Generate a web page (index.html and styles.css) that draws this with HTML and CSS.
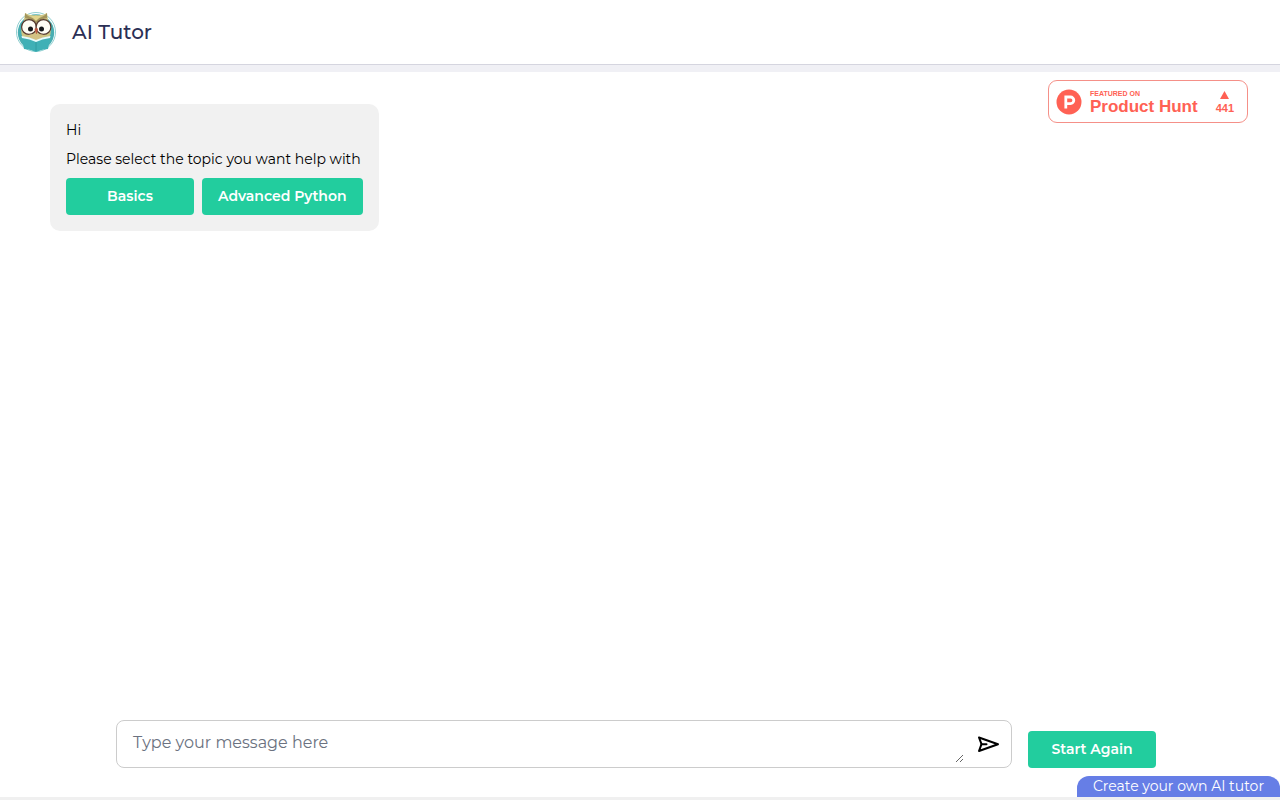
FILE: index.html
```html
<!DOCTYPE html>
<html lang="en">
<head>
    <meta charset="UTF-8">
    <meta name="viewport" content="width=device-width, initial-scale=1.0">
    <title>AI Tutor</title>
    <link rel="stylesheet" href="styles.css">
</head>
<body>
    <header class="header">
        <svg class="logo" viewBox="0 0 40 40" aria-hidden="true">
            <circle cx="20" cy="20" r="19.5" fill="#fff" stroke="#8fcfd0" stroke-width="1"/>
            <circle cx="20" cy="20.5" r="18.2" fill="#48aeb2"/>
            <path d="M9 1 Q14 4 20 3 Q26 4 31 1 L32 8 Q37 18 33 27 L7 27 Q3 18 8 8Z" fill="#cdc584"/>
            <path d="M9 1 Q12 5 20 7 Q28 5 31 1 L31 6 Q25 7 20 12 Q15 7 9 6Z" fill="#a3945c"/>
            <path d="M15 4 L20 9 L25 4Z" fill="#e2d58d"/>
            <circle cx="13" cy="15" r="7.4" fill="#fffdf4" stroke="#55392f" stroke-width="1.2"/>
            <circle cx="27.500" cy="15" r="7.4" fill="#fffdf4" stroke="#55392f" stroke-width="1.2"/>
            <circle cx="14.500" cy="17" r="2.500" fill="#17191b"/>
            <circle cx="25.500" cy="17" r="2.500" fill="#17191b"/>
            <path d="M18.500 17 Q20.500 15 22 17 L20.500 23Z" fill="#bd5a43"/>
            <path d="M12 23 Q20 21 28 23 L27 28 H13Z" fill="#d3c284"/>
            <path d="M6 25 Q14 25 20 29 Q26 25 34 25 L32 37 Q26 37 20 40 Q14 37 8 37Z" fill="#3fb0b6"/>
            <path d="M5.500 24 Q14 25 20 28 Q26 25 34.500 24 L34 26 Q26 27 20 30 Q14 27 6 26Z" fill="#e9fafa"/>
            <path d="M20 30 V39" stroke="#2f979d" stroke-width=".8"/>
        </svg>
        <h1>AI Tutor</h1>
    </header>

    <main class="chat">
        <a class="ph-badge" href="#">
            <svg class="ph-logo" viewBox="0 0 26 26" aria-hidden="true">
                <circle cx="13" cy="13" r="12.500" fill="#ff6154"/>
                <path d="M9.800 19.500 V8 H14.500 A3.300 3.300 0 0 1 14.500 14.600 H9.800" fill="none" stroke="#fff" stroke-width="2.800"/>
            </svg>
            <span class="ph-text">
                <span class="ph-featured">FEATURED ON</span>
                <span class="ph-name">Product Hunt</span>
            </span>
            <span class="ph-votes">
                <svg viewBox="0 0 9 8" aria-hidden="true"><path d="M4.500 0 L9 8 H0Z" fill="#ff6154"/></svg>
                <span>441</span>
            </span>
        </a>

        <div class="messages">
            <div class="message">
                <p>Hi</p>
                <p>Please select the topic you want help with</p>
                <div class="options">
                    <button type="button" class="btn">Basics</button>
                    <button type="button" class="btn">Advanced Python</button>
                </div>
            </div>
        </div>

        <div class="chat-bar">
            <form class="chat-form">
                <div class="input-box">
                    <textarea rows="1" placeholder="Type your message here" aria-label="Message"></textarea>
                    <button type="submit" class="send" aria-label="Send">
                        <svg viewBox="0 0 24 24" fill="none" stroke="#000" stroke-width="2" stroke-linejoin="round" stroke-linecap="round" aria-hidden="true">
                            <path d="M3 5.500 L22 12.200 L3 19 L5.500 12.200Z"/>
                            <path d="M5.500 12.200 H10.500"/>
                        </svg>
                    </button>
                </div>
                <button type="button" class="btn">Start Again</button>
            </form>
        </div>

        <a class="create-link" href="#">Create your own AI tutor</a>
    </main>
</body>
</html>
```
FILE: styles.css
```css
:root {
    --accent-color: #22cd9e;
    --ph-color: #ff6154;
    --band-color: #f0f0f5;
}

* {
    box-sizing: border-box;
    margin: 0;
    padding: 0;
}

body {
    font-family: Montserrat, Inter, sans-serif;
    font-size: 14px;
    line-height: 21px;
    color: #000;
    background: #fff;
    min-height: 100vh;
    display: flex;
    flex-direction: column;
    border-bottom: 3px solid #f0f0f0;
}

button,
textarea {
    font-family: inherit;
}

.header {
    display: flex;
    align-items: center;
    gap: 16px;
    padding: 12px 16px;
    border-bottom: 1px solid #d5d5df;
}

.logo {
    width: 40px;
    height: 40px;
}

.header h1 {
    font-size: 20px;
    font-weight: 500;
    line-height: 28px;
    color: #2b2f55;
}

.chat {
    position: relative;
    flex: 1;
    display: flex;
    flex-direction: column;
    border-top: 7px solid var(--band-color);
}

/* Product Hunt badge floats over the conversation */
.ph-badge {
    position: absolute;
    top: 8px;
    right: 32px;
    display: flex;
    align-items: center;
    width: 200px;
    height: 43px;
    padding: 0 13px 0 7px;
    border: 1px solid #f59088;
    border-radius: 9px;
    background: #fff;
    color: var(--ph-color);
    font-family: "Liberation Sans", Arial, sans-serif;
    font-weight: 700;
    text-decoration: none;
}

.ph-logo {
    width: 26px;
    height: 26px;
    margin-right: 8px;
}

.ph-text {
    display: flex;
    flex-direction: column;
    padding-top: 2px;
}

.ph-featured {
    font-size: 7px;
    line-height: 8px;
}

.ph-name {
    font-size: 17px;
    line-height: 18px;
}

.ph-votes {
    display: flex;
    flex-direction: column;
    align-items: center;
    gap: 3px;
    margin-left: auto;
    padding-top: 2px;
    font-size: 11px;
    line-height: 13px;
}

.ph-votes svg {
    width: 9px;
    height: 8px;
}

.messages {
    flex: 1;
    padding: 32px 50px;
}

.message {
    width: fit-content;
    padding: 16px;
    border-radius: 10px;
    background: #f1f1f1;
}

.message p {
    margin-bottom: 8px;
}

.options {
    display: flex;
    gap: 8px;
}

.btn {
    min-width: 128px;
    padding: 8px 16px;
    border: none;
    border-radius: 4px;
    background: var(--accent-color);
    color: #fff;
    font-size: 14px;
    font-weight: 600;
    line-height: 21px;
    cursor: pointer;
}

.chat-bar {
    padding: 0 8px 8px 0;
}

.chat-form {
    display: flex;
    align-items: flex-end;
    gap: 16px;
    max-width: 1040px;
    margin: 0 auto;
}

.input-box {
    flex: 1;
    display: flex;
    align-items: center;
    height: 48px;
    padding-right: 11px;
    border: 1px solid #ccc;
    border-radius: 8px;
}

.input-box textarea {
    flex: 1;
    min-width: 0;
    height: 42px;
    margin-bottom: 4px;
    padding: 10px 16px 8px;
    border: none;
    outline: none;
    background: transparent;
    font-size: 16px;
    line-height: 24px;
    resize: vertical;
}

.input-box textarea::placeholder {
    color: #6b7280;
}

.send {
    display: flex;
    margin-left: 12px;
    border: none;
    background: none;
    cursor: pointer;
}

.send svg {
    width: 24px;
    height: 24px;
}

.create-link {
    align-self: flex-end;
    padding: 0 16px;
    border-radius: 12px 12px 0 0;
    background: #667ee6;
    color: #fff;
    text-decoration: none;
}

@media (max-width: 600px) {
    .chat-bar {
        padding: 0 8px 8px;
    }

    .messages {
        padding: 64px 16px 16px;
    }
}
```
